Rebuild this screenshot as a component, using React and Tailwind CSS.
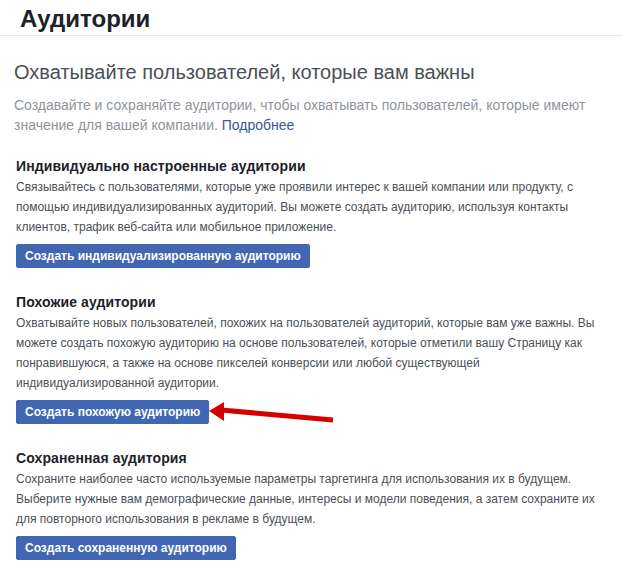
const sections = [
  {
    title: "Индивидуально настроенные аудитории",
    lines: [
      "Связывайтесь с пользователями, которые уже проявили интерес к вашей компании или продукту, с",
      "помощью индивидуализированных аудиторий. Вы можете создать аудиторию, используя контакты",
      "клиентов, трафик веб-сайта или мобильное приложение.",
    ],
    button: "Создать индивидуализированную аудиторию",
  },
  {
    title: "Похожие аудитории",
    lines: [
      "Охватывайте новых пользователей, похожих на пользователей аудиторий, которые вам уже важны. Вы",
      "можете создать похожую аудиторию на основе пользователей, которые отметили вашу Страницу как",
      "понравившуюся, а также на основе пикселей конверсии или любой существующей",
      "индивидуализированной аудитории.",
    ],
    button: "Создать похожую аудиторию",
    arrow: true,
  },
  {
    title: "Сохраненная аудитория",
    lines: [
      "Сохраните наиболее часто используемые параметры таргетинга для использования их в будущем.",
      "Выберите нужные вам демографические данные, интересы и модели поведения, а затем сохраните их",
      "для повторного использования в рекламе в будущем.",
    ],
    button: "Создать сохраненную аудиторию",
  },
];

function Arrow() {
  return (
    <svg
      className="absolute left-full top-0"
      width="130"
      height="30"
      viewBox="0 0 130 30"
    >
      <line x1="12" y1="11" x2="124" y2="21" stroke="#d40000" strokeWidth="5" />
      <polygon points="0,12 15,3 15,22" fill="#d40000" />
    </svg>
  );
}

export default function App() {
  return (
    <div className="w-[621px] h-[567px] bg-white font-['Liberation_Sans',Arial,sans-serif] overflow-hidden">
      <div className="h-[36px] border-b border-[#e5e7eb] pl-[20px] pt-[5px]">
        <h1 className="text-[24px] leading-[28px] font-bold text-[#1d2129]">Аудитории</h1>
      </div>
      <div className="px-[14px] pt-[24px]">
        <h2 className="text-[20px] leading-[24px] text-[#4b4f56]">
          Охватывайте пользователей, которые вам важны
        </h2>
        <p className="mt-[11px] text-[14px] leading-[20px] text-[#90949c]">
          Создавайте и сохраняйте аудитории, чтобы охватывать пользователей, которые имеют
          <br />
          значение для вашей компании. <span className="text-[#365899]">Подробнее</span>
        </p>
      </div>
      <div className="px-[16px]">
        {sections.map((s) => (
          <div key={s.title} className="pt-[24px] first:pt-[21px]">
            <h3 className="mb-[1px] text-[14px] leading-[20px] font-bold tracking-[0.1px] text-[#1d2129]">
              {s.title}
            </h3>
            <p className="text-[12px] leading-[20px] text-[#4b4f56]">
              {s.lines.map((l) => (
                <span key={l} className="block">{l}</span>
              ))}
            </p>
            <div className="relative mt-[6px] inline-block">
              <button className="h-[24px] px-[8px] rounded-[2px] bg-[#4267b2] border border-[#4267b2] text-white text-[12px] font-bold leading-[22px]">
                {s.button}
              </button>
              {s.arrow && <Arrow />}
            </div>
          </div>
        ))}
      </div>
    </div>
  );
}
